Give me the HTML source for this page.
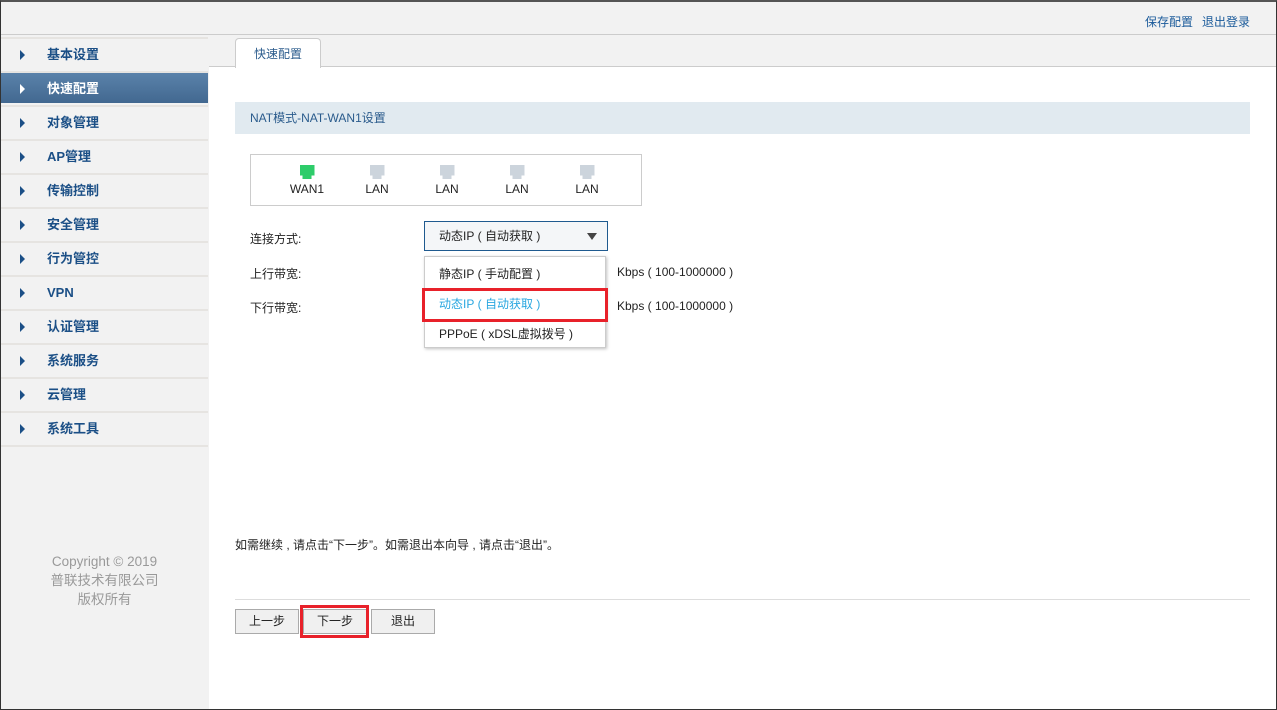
<!DOCTYPE html>
<html><head><meta charset="utf-8"><style>
*{margin:0;padding:0;box-sizing:border-box}
body{width:1277px;height:710px;overflow:hidden;font-family:"Liberation Sans","Noto Sans CJK SC",sans-serif;font-size:12px;color:#222;background:#fff;position:relative}
.frame{position:absolute;left:0;top:0;width:1277px;height:710px;border:1px solid #333;border-top:2px solid #555;pointer-events:none;z-index:10}
.top{position:absolute;left:0;top:0;width:1277px;height:35px;background:#f2f2f2;border-bottom:1px solid #ccc}
.top .links{position:absolute;right:27px;top:13px;color:#1a5a9a;font-size:12px}
.top .links span{margin-left:9px}
.side{position:absolute;left:0;top:35px;width:209px;height:675px;background:#f2f2f2}
.item{position:absolute;left:0;width:208px;height:32px;font-size:13px;font-weight:bold;color:#1b4f86;line-height:32px;padding-left:47px;border-top:2px solid #e6e4e1}
.item:before{content:"";position:absolute;left:20px;top:11px;border-left:5px solid #1b4f86;border-top:5px solid transparent;border-bottom:5px solid transparent}
.item.act{background:linear-gradient(#5a82aa,#426890);color:#fff;border-top-color:#e6e4e1}
.item.act:before{border-left-color:#fff}
.item.end:before{display:none}
.copy{position:absolute;left:0;top:552px;width:209px;text-align:center;color:#999;font-size:13.5px;line-height:19px}
.tabbar{position:absolute;left:209px;top:35px;width:1067px;height:32px;background:#f2f2f2;border-bottom:1px solid #ccc}
.tab{position:absolute;left:235px;top:38px;width:86px;height:30px;background:#fff;border:1px solid #ccc;border-bottom:none;border-radius:4px 4px 0 0;text-align:center;line-height:30px;color:#2a5b8c;font-size:12px}
.hdr{position:absolute;left:235px;top:102px;width:1015px;height:32px;background:#e1eaf0;color:#2a5b8c;line-height:32px;padding-left:15px}
.ports{position:absolute;left:250px;top:154px;width:392px;height:52px;border:1px solid #ccc}
.port{position:absolute;top:10px;width:50px;text-align:center;font-size:12px}
.port i{display:block;margin:0 auto 3px;width:15px;height:14px;background:#ccd4dc;clip-path:polygon(0 0,100% 0,100% 75%,80% 75%,80% 100%,20% 100%,20% 75%,0 75%)}
.port i.g{background:#2ecc6a}
.lbl{position:absolute;left:250px}
.sel{position:absolute;left:424px;top:221px;width:184px;height:30px;border:1px solid #1f5a8f;background:#f4f6f8;line-height:28px;padding-left:14px}
.sel:after{content:"";position:absolute;right:10px;top:11px;border-top:7px solid #444;border-left:5px solid transparent;border-right:5px solid transparent}
.dd{position:absolute;left:424px;top:256px;width:182px;height:92px;background:#fff;border:1px solid #ccc;box-shadow:1px 1px 3px rgba(0,0,0,.25)}
.dd div{position:absolute;left:14px}
.hl{position:absolute;left:422px;top:288px;width:186px;height:34px;border:3px solid #e8212a}
.kb{position:absolute;left:617px}
.note{position:absolute;left:235px;top:536px}
.line{position:absolute;left:235px;top:599px;width:1015px;border-top:1px solid #ddd}
.btn{position:absolute;top:609px;width:64px;height:25px;border:1px solid #aaa;background:#f0f0f0;text-align:center;line-height:23px}
.rb{position:absolute;left:300px;top:605px;width:69px;height:33px;border:3px solid #e8212a}
</style></head><body>
<div class="top"><div class="links"><span>保存配置</span><span>退出登录</span></div></div>
<div class="side">
<div class="item" style="top:2px">基本设置</div>
<div class="item act" style="top:36px">快速配置</div>
<div class="item" style="top:70px">对象管理</div>
<div class="item" style="top:104px">AP管理</div>
<div class="item" style="top:138px">传输控制</div>
<div class="item" style="top:172px">安全管理</div>
<div class="item" style="top:206px">行为管控</div>
<div class="item" style="top:240px">VPN</div>
<div class="item" style="top:274px">认证管理</div>
<div class="item" style="top:308px">系统服务</div>
<div class="item" style="top:342px">云管理</div>
<div class="item" style="top:376px">系统工具</div>
<div class="item end" style="top:410px;height:2px"></div>
</div>
<div class="copy">Copyright © 2019<br>普联技术有限公司<br>版权所有</div>
<div class="tabbar"></div>
<div class="tab">快速配置</div>
<div class="hdr">NAT模式-NAT-WAN1设置</div>
<div class="ports">
<div class="port" style="left:31px"><i class="g"></i>WAN1</div>
<div class="port" style="left:101px"><i></i>LAN</div>
<div class="port" style="left:171px"><i></i>LAN</div>
<div class="port" style="left:241px"><i></i>LAN</div>
<div class="port" style="left:311px"><i></i>LAN</div>
</div>
<div class="lbl" style="top:230px">连接方式:</div>
<div class="lbl" style="top:265px">上行带宽:</div>
<div class="lbl" style="top:299px">下行带宽:</div>
<div class="sel">动态IP&nbsp;(&nbsp;自动获取&nbsp;)</div>
<div class="kb" style="top:265px">Kbps&nbsp;(&nbsp;100-1000000&nbsp;)</div>
<div class="kb" style="top:299px">Kbps&nbsp;(&nbsp;100-1000000&nbsp;)</div>
<div class="dd">
<div style="top:8px">静态IP&nbsp;(&nbsp;手动配置&nbsp;)</div>
<div style="top:38px;color:#2aa7e0">动态IP&nbsp;(&nbsp;自动获取&nbsp;)</div>
<div style="top:68px">PPPoE&nbsp;(&nbsp;xDSL虚拟拨号&nbsp;)</div>
</div>
<div class="hl"></div>
<div class="note">如需继续&nbsp;,&nbsp;请点击“下一步”。如需退出本向导&nbsp;,&nbsp;请点击“退出”。</div>
<div class="line"></div>
<div class="btn" style="left:235px">上一步</div>
<div class="btn" style="left:303px">下一步</div>
<div class="btn" style="left:371px">退出</div>
<div class="rb"></div>
<div class="frame"></div>
</body></html>
